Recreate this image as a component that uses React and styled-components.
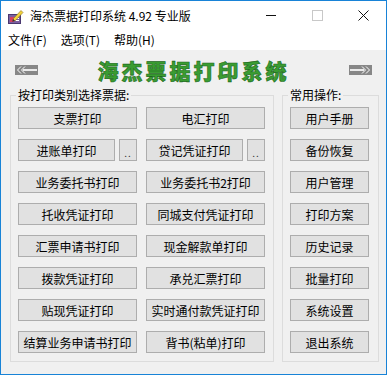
import React from "react";
import styled, { createGlobalStyle } from "styled-components";

const GlobalStyle = createGlobalStyle`
  html, body {
    margin: 0;
    padding: 0;
    background: #ffffff;
  }
  body {
    font-family: "Noto Sans CJK SC", "Microsoft YaHei", sans-serif;
    font-size: 12px;
    color: #000;
  }
`;

const Window = styled.div`
  width: 387px;
  height: 375px;
  box-sizing: border-box;
  border: 1px solid #1883d7;
  display: flex;
  flex-direction: column;
  background: #f0f0f0;
  overflow: hidden;
`;

const TitleBar = styled.div`
  height: 29px;
  background: #fff;
  display: flex;
  align-items: center;
  flex-shrink: 0;
`;

const AppIcon = styled.div`
  width: 16px;
  height: 16px;
  margin-left: 7px;
  margin-right: 6px;
  display: flex;
`;

const Title = styled.div`
  flex: 1;
  font-size: 12px;
  line-height: 16px;
`;

const Caption = styled.div`
  width: 46px;
  height: 29px;
  display: flex;
  align-items: center;
  justify-content: center;
`;

const MenuBar = styled.div`
  height: 20px;
  padding-top: 1px;
  box-sizing: border-box;
  background: #fff;
  display: flex;
  flex-shrink: 0;
`;

const MenuItem = styled.div`
  padding: 0 7px;
  line-height: 18px;
  font-size: 12px;
`;

const Client = styled.div`
  flex: 1;
  display: flex;
  flex-direction: column;
  padding: 0 7px 0 9px;
`;

const Banner = styled.div`
  height: 37px;
  padding: 3px 7px 0 5px;
  box-sizing: border-box;
  display: flex;
  align-items: center;
  justify-content: space-between;
`;

const BannerTitle = styled.div`
  font-size: 21px;
  font-weight: 900;
  letter-spacing: 3px;
  color: #3a9c32;
  -webkit-text-stroke: 0.6px #1c6a1c;
  line-height: 26px;
`;

const Groups = styled.div`
  display: flex;
  gap: 8px;
`;

const Group = styled.fieldset`
  margin: 0;
  width: ${(p) => p.$width}px;
  box-sizing: border-box;
  padding: 4px 8px 8px 7px;
  border: 1px solid #dcdcdc;
  min-width: 0;
`;

const Legend = styled.legend`
  padding: 0 2px;
  margin-left: -2px;
  font-size: 12px;
  line-height: 16px;
`;

const ButtonGrid = styled.div`
  display: grid;
  grid-template-columns: ${(p) => p.$columns};
  column-gap: 9px;
  row-gap: 10px;
`;

const Button = styled.button`
  height: 22px;
  padding: 0;
  margin: 0;
  box-sizing: border-box;
  background: #e1e1e1;
  border: 1px solid #adadad;
  border-radius: 0;
  font-family: inherit;
  font-size: 12px;
  color: #000;
  width: ${(p) => (p.$width ? `${p.$width}px` : "100%")};
  flex-shrink: 0;
`;

const Split = styled.div`
  display: flex;
  gap: 4px;
`;

const DotsButton = styled(Button)`
  width: 18px;
  font-size: 10px;
  letter-spacing: 1px;
  line-height: 26px;
  color: #333;
`;

const LeftArrow = () => (
  <svg width="23" height="10" viewBox="0 0 23 10">
    <rect x="0" y="0" width="23" height="10" fill="#878787" />
    <path d="M6 1.5 L2.5 5 L6 8.5 M10 1.5 L6.5 5 L10 8.5" stroke="#fff" strokeWidth="1" fill="none" />
    <path d="M8 5 H22" stroke="#eaeaea" strokeWidth="2" />
  </svg>
);

const RightArrow = () => (
  <svg width="23" height="10" viewBox="0 0 23 10">
    <rect x="0" y="0" width="23" height="10" fill="#878787" />
    <path d="M17 1.5 L20.5 5 L17 8.5 M13 1.5 L16.5 5 L13 8.5" stroke="#fff" strokeWidth="1" fill="none" />
    <path d="M1 5 H15" stroke="#eaeaea" strokeWidth="2" />
  </svg>
);

const left = [
  ["支票打印"],
  ["电汇打印"],
  ["进账单打印", true],
  ["贷记凭证打印", true],
  ["业务委托书打印"],
  ["业务委托书2打印"],
  ["托收凭证打印"],
  ["同城支付凭证打印"],
  ["汇票申请书打印"],
  ["现金解款单打印"],
  ["拨款凭证打印"],
  ["承兑汇票打印"],
  ["贴现凭证打印"],
  ["实时通付款凭证打印"],
  ["结算业务申请书打印"],
  ["背书(粘单)打印"],
];

const right = [
  "用户手册",
  "备份恢复",
  "用户管理",
  "打印方案",
  "历史记录",
  "批量打印",
  "系统设置",
  "退出系统",
];

export default function App() {
  return (
    <>
      <GlobalStyle />
      <Window>
        <TitleBar>
          <AppIcon>
            <svg width="16" height="16" viewBox="0 0 16 16">
              <rect x="0.5" y="6.5" width="12" height="9" fill="#7b5fa0" stroke="#4a3870" />
              <rect x="2" y="9" width="4" height="5" fill="#d84060" />
              <rect x="7" y="10" width="4" height="1" fill="#fff" />
              <rect x="7" y="12" width="4" height="1" fill="#fff" />
              <path d="M5 11 L13 2.5 L15 4.5 L7 13 Z" fill="#f2d23a" stroke="#8a7020" strokeWidth="0.6" />
              <path d="M5 11 L4.2 13.8 L7 13 Z" fill="#333" />
            </svg>
          </AppIcon>
          <Title>海杰票据打印系统 4.92 专业版</Title>
          <Caption>
            <svg width="11" height="11" viewBox="0 0 11 11">
              <path d="M0 5.5 H10" stroke="#111" strokeWidth="1" />
            </svg>
          </Caption>
          <Caption>
            <svg width="11" height="11" viewBox="0 0 11 11">
              <rect x="0.5" y="0.5" width="10" height="10" fill="none" stroke="#c8c8c8" />
            </svg>
          </Caption>
          <Caption>
            <svg width="11" height="11" viewBox="0 0 11 11">
              <path d="M0.5 0.5 L10.5 10.5 M10.5 0.5 L0.5 10.5" stroke="#111" strokeWidth="1" />
            </svg>
          </Caption>
        </TitleBar>
        <MenuBar>
          <MenuItem>文件(F)</MenuItem>
          <MenuItem>选项(T)</MenuItem>
          <MenuItem>帮助(H)</MenuItem>
        </MenuBar>
        <Client>
          <Banner>
            <LeftArrow />
            <BannerTitle>海杰票据打印系统</BannerTitle>
            <RightArrow />
          </Banner>
          <Groups>
            <Group $width={264}>
              <Legend>按打印类别选择票据:</Legend>
              <ButtonGrid $columns="119px 119px">
                {left.map(([label, more]) =>
                  more ? (
                    <Split key={label}>
                      <Button $width={97}>{label}</Button>
                      <DotsButton>..</DotsButton>
                    </Split>
                  ) : (
                    <Button key={label}>{label}</Button>
                  )
                )}
              </ButtonGrid>
            </Group>
            <Group $width={97}>
              <Legend>常用操作:</Legend>
              <ButtonGrid $columns="79px">
                {right.map((label) => (
                  <Button key={label}>{label}</Button>
                ))}
              </ButtonGrid>
            </Group>
          </Groups>
        </Client>
      </Window>
    </>
  );
}
